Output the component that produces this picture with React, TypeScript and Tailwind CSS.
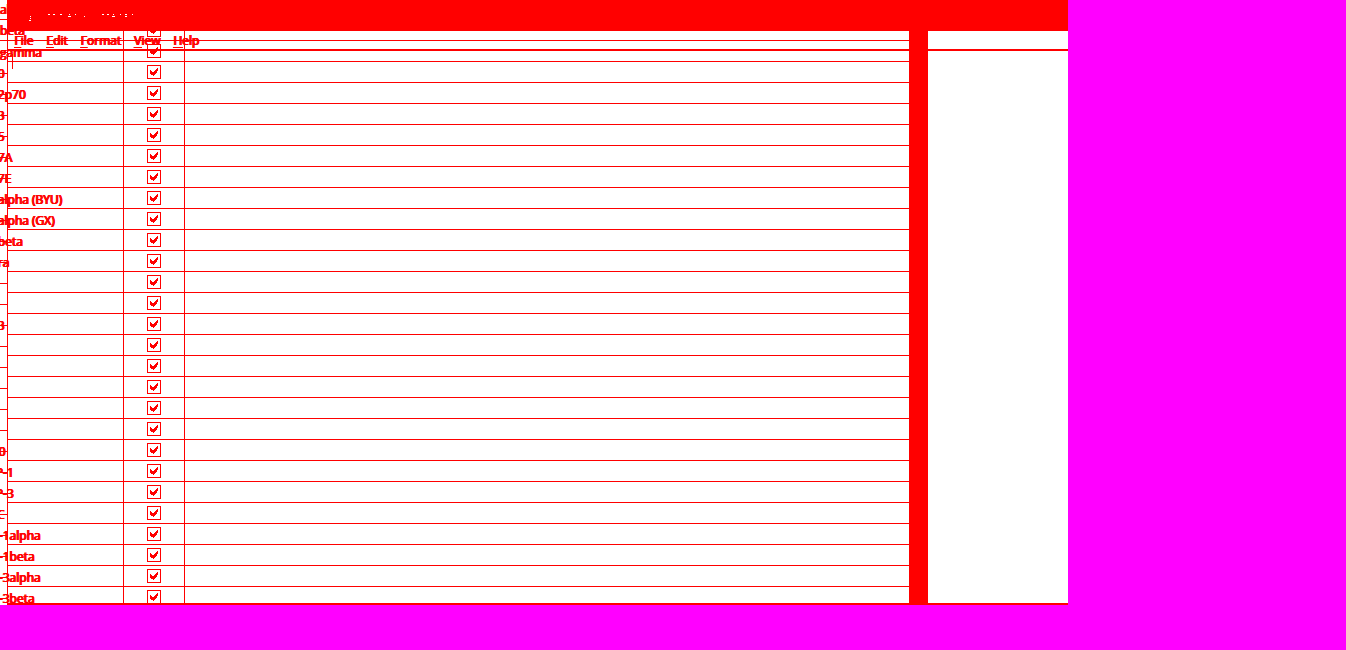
import React from "react";

type Analyte = { name: string; ruled?: boolean };

const analytes: Analyte[] = [
  { name: "IFN-alpha", ruled: true },
  { name: "IFN-beta", ruled: true },
  { name: "IFN-gamma" },
  { name: "IL-10" },
  { name: "IL-12p70" },
  { name: "IL-13" },
  { name: "IL-15" },
  { name: "IL-17A" },
  { name: "IL-17E" },
  { name: "IL-1alpha (BYU)" },
  { name: "IL-1alpha (GX)" },
  { name: "IL-1beta" },
  { name: "IL-1ra" },
  { name: "IL-2" },
  { name: "IL-3" },
  { name: "IL-33" },
  { name: "IL-4" },
  { name: "IL-5" },
  { name: "IL-6" },
  { name: "IL-7" },
  { name: "IL-8" },
  { name: "IP-10" },
  { name: "MCP-1" },
  { name: "MCP-3" },
  { name: "MDC" },
  { name: "MIP-1alpha" },
  { name: "MIP-1beta" },
  { name: "MIP-3alpha" },
  { name: "MIP-3beta" },
];

const menus = ["File", "Edit", "Format", "View", "Help"];

// Visible specks of the title: x, y, width, height
const specks = [
  [30, 16, 1, 1], [30, 18, 1, 1], [29, 20, 2, 1],
  [48, 14, 2, 1], [53, 14, 2, 1], [60, 14, 2, 1],
  [69, 14, 1, 1], [68, 16, 3, 1], [75, 14, 1, 1], [84, 16, 1, 1],
  [102, 14, 2, 1], [107, 14, 2, 1], [113, 14, 1, 1], [112, 16, 3, 1],
  [120, 14, 1, 1], [125, 14, 2, 1], [125, 16, 2, 1], [132, 14, 1, 1],
];

function Check({ label }: { label: string }) {
  return (
    <label className="relative mx-auto block h-[14px] w-[14px]">
      <input
        type="checkbox"
        defaultChecked
        aria-label={label}
        className="peer block h-[14px] w-[14px] appearance-none border border-[#ff0000] bg-white"
      />
      <svg
        viewBox="0 0 14 14"
        shapeRendering="crispEdges"
        className="pointer-events-none absolute inset-0 hidden h-[14px] w-[14px] peer-checked:block"
      >
        <path d="M3 5H4V6H5V7H7V6H8V5H9V4H10V3H11V6H10V8H9V9H8V10H7V11H6V10H4V9H3Z" fill="#ff0000" />
      </svg>
    </label>
  );
}

export default function App() {
  return (
    <div className="flex h-screen overflow-hidden bg-[#ff00ff] pr-[278px] pb-[45px]">
      <main className="relative flex min-w-0 flex-1 overflow-hidden bg-white font-['Open_Sans',sans-serif] text-[12px] text-[#ff0000] [text-shadow:0_0_0_#ff0000,1px_0_0_#ff0000,1px_0_0_#ff0000]">
        <div className="-mt-px min-w-0 flex-1">
          <table className="w-full table-fixed border-separate border-spacing-0">
            <colgroup>
              <col className="w-[7px]" />
              <col className="w-[117px]" />
              <col className="w-[61px]" />
              <col />
            </colgroup>
            <tbody>
              {analytes.map(({ name, ruled }) => (
                <tr key={name} className="h-[21px]">
                  <td className={ruled ? "relative border-b border-[#ff0000] p-0" : "relative p-0"}>
                    <span className="relative z-10 -ml-[23px] block h-5 leading-[22px] whitespace-nowrap">{name}</span>
                    {!ruled && <span className="absolute top-[11px] left-0 h-px w-[7px] bg-[#ff0000]" />}
                  </td>
                  <td className="border-r border-b border-[#ff0000] p-0" />
                  <td className="border-r border-b border-[#ff0000] p-0">
                    <Check label={name} />
                  </td>
                  <td className="border-b border-[#ff0000] p-0" />
                </tr>
              ))}
            </tbody>
          </table>
        </div>
        <div className="w-[19px] bg-[#ff0000]" />
        <div className="w-[140px]" />

        <div className="pointer-events-none absolute inset-y-0 right-0 left-[7px] z-20 flex flex-col border-b-2 border-l border-[#ff0000]">
          <header className="h-[31px] bg-[#ff0000]">
            <svg width="140" height="31" viewBox="8 0 140 31" shapeRendering="crispEdges" fill="#ffffff">
              {specks.map(([x, y, w, h]) => (
                <rect key={`${x}-${y}`} x={x} y={y} width={w} height={h} />
              ))}
            </svg>
          </header>
          <nav className="pointer-events-auto flex h-5 gap-[13px] border-b-2 border-[#ff0000] pl-[6px]">
            {menus.map((menu) => (
              <button
                key={menu}
                type="button"
                className="h-5 leading-5 [text-shadow:0_0_0_#ff0000,1px_0_0_#ff0000,1px_0_0_#ff0000]"
              >
                <span className="underline underline-offset-2">{menu[0]}</span>
                {menu.slice(1)}
              </button>
            ))}
          </nav>
          <div className="mt-[3px] ml-1 h-[15px] w-px bg-[#ff0000]" />
        </div>
      </main>
    </div>
  );
}
